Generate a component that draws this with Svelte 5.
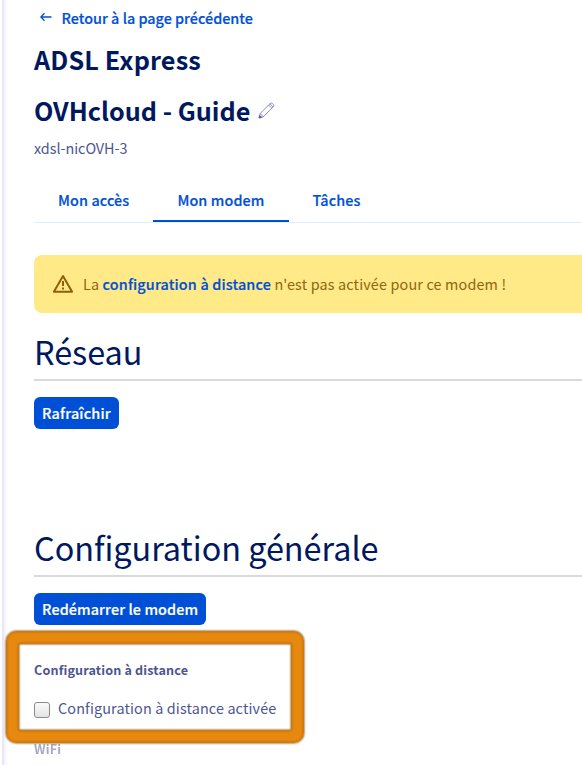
<script>
  const tabs = ['Mon accès', 'Mon modem', 'Tâches'];
  let active = $state('Mon modem');
  let remote = $state(false);
</script>

<main class="page">
  <a class="back" href="#back">
    <svg width="12" height="10" viewBox="0 0 12 10"><path d="M11.5 5H1M4.5 1.3.9 5l3.6 3.7" /></svg>
    <span>Retour à la page précédente</span>
  </a>
  <h1>ADSL Express</h1>
  <div class="name">
    <h1>OVHcloud - Guide</h1>
    <svg width="17" height="17" viewBox="0 0 17 17"><path d="M1 16l1.2-4.5L12.3 1.4q1-.8 2 0l1.2 1.2q.8 1 0 2L5.3 14.8zM2.2 11.5l3.1 3.3M10.7 3l3.2 3.3M12 1.8l3.3 3.3" /><path class="tip" d="M1 16l.7-2.6 1.9 1.9z" /></svg>
  </div>
  <p class="id">xdsl-nicOVH-3</p>
  <nav>
    {#each tabs as tab}
      <button class:active={tab === active} onclick={() => (active = tab)}>{tab}</button>
    {/each}
  </nav>
  <div class="alert">
    <svg width="22" height="20" viewBox="0 0 22 20"><path d="M11 2 1.9 17.8H20.1z" /><path d="M11 7v5M11 13.5v2" /></svg>
    <p>La <a href="#remote">configuration à distance</a> n'est pas activée pour ce modem !</p>
  </div>
  <section class="network">
    <h2>Réseau</h2>
    <button class="btn refresh">Rafraîchir</button>
  </section>
  <section>
    <h2>Configuration générale</h2>
    <button class="btn">Redémarrer le modem</button>
    <h3 class="remote">Configuration à distance</h3>
    <label><input type="checkbox" bind:checked={remote} /><span>Configuration à distance activée</span></label>
    <h3 class="wifi">WiFi</h3>
  </section>
  <div class="frame"></div>
</main>

<style>
  :global(body) { background: #fff; overflow: hidden; }
  * { box-sizing: border-box; }
  .page {
    position: relative;
    width: 582px;
    height: 765px;
    overflow: hidden;
    padding: 6px 0 0 34px;
    background: linear-gradient(90deg, #fff 2px, #e8e6f7 2px, #e8e6f7 4px, #f3f2fb 4px, #fff 8px);
    font: 14.4px/24px "Noto Sans CJK SC", "Open Sans", sans-serif;
    color: #4d5592;
  }
  svg { fill: none; stroke: currentColor; flex: none; }
  h1, h2, h3, p { margin: 0; }
  a { color: #0050d7; font-weight: 500; text-decoration: none; -webkit-text-stroke: 0.2px; }
  button { border: 0; background: none; font: inherit; font-weight: 500; letter-spacing: 0.1px; color: #0050d7; -webkit-text-stroke: 0.2px; }
  .back { display: flex; align-items: center; gap: 9.5px; height: 24px; padding-left: 6px; }
  .back svg { stroke-width: 1.3; margin-top: -2px; }
  h1 { font-size: 25.2px; line-height: 36px; font-weight: 700; letter-spacing: 0.15px; color: #00185e; margin-top: 11px; }
  .name { display: flex; align-items: center; gap: 8px; margin-top: 15px; }
  .name h1 { margin: 0; letter-spacing: 0; }
  .name svg { stroke-width: 0.65; color: #4453a0; }
  .tip { fill: currentColor; }
  .id { margin-top: 8px; letter-spacing: -0.04px; }
  nav { display: flex; height: 63px; border-bottom: 1px solid #def1fc; padding-top: 17px; }
  nav button { padding: 3px 24px 0; border-bottom: 2px solid transparent; }
  nav .active { border-color: #0050d7; }
  .alert { display: flex; align-items: center; gap: 9px; height: 58px; margin-top: 32px; padding-left: 18px; border-radius: 8px 0 0 8px; background: #ffea87; color: #916410; letter-spacing: 0.15px; }
  .alert svg { stroke-width: 2; stroke-linejoin: round; color: #8f5f0c; }
  h2 { height: 68px; border-bottom: 2px solid #dadada; font-size: 32.4px; line-height: 48px; padding-top: 14px; font-weight: 400; letter-spacing: -0.03px; color: #00185e; }
  .network { height: 196px; }
  .btn { display: block; height: 32px; margin-top: 16px; padding: 0 8px; border-radius: 6px; background: #0050d7; color: #fff; }
  .refresh { letter-spacing: 0.2px; }
  h3 { font-size: 12.6px; line-height: 20px; font-weight: 700; letter-spacing: 0.14px; }
  .remote { margin-top: 35px; }
  label { display: flex; align-items: center; gap: 8px; margin-top: 16px; height: 24px; letter-spacing: 0.13px; }
  input { appearance: none; width: 16px; height: 16px; margin: 3px 0 0; border: 1px solid #8b8b85; border-radius: 3px; background: linear-gradient(#fafafa, #e4e4e4); }
  .wifi { margin-top: 19px; opacity: 0.5; }
  /* Highlight around the remote configuration option */
  .frame { position: absolute; left: 6px; top: 631px; width: 298px; height: 112px; border: 13px solid #e8890f; border-radius: 10px; box-shadow: 0 0 2px #7d4a00, inset 0 0 2px #7d4a00; }
  .frame::before, .frame::after { content: ""; position: absolute; border: 1.5px solid #8a5a1a; filter: blur(0.8px); opacity: 0.85; }
  .frame::before { inset: -13px; border-radius: 10px; }
  .frame::after { inset: -1px; border-radius: 2px; }
</style>
